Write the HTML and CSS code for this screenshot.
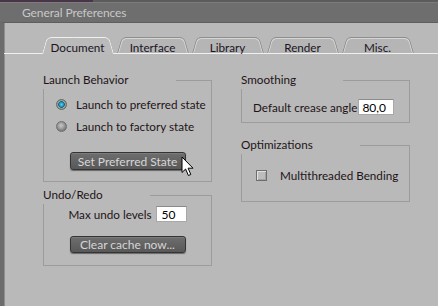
FILE: index.html
```html
<!DOCTYPE html>
<html lang="en">
<head>
    <meta charset="UTF-8">
    <meta name="viewport" content="width=device-width, initial-scale=1.0">
    <title>General Preferences</title>
    <link rel="stylesheet" href="styles.css">
</head>
<body>

<div class="desk"></div>

<div class="window">
    <div class="title-bar">General Preferences</div>

    <div class="window-body">
        <!-- Tabs -->
        <div class="tabs">
            <div class="tab active">Document</div>
            <div class="tab">Interface</div>
            <div class="tab">Library</div>
            <div class="tab">Render</div>
            <div class="tab">Misc.</div>
        </div>

        <div class="panel">
            <div class="column">
                <div class="group">
                    <div class="group-head">
                        <span class="group-label">Launch Behavior</span>
                        <span class="group-rule"></span>
                    </div>
                    <div class="group-body launch-body">
                        <label class="radio-row">
                            <span class="radio checked"></span>
                            Launch to preferred state
                        </label>
                        <label class="radio-row">
                            <span class="radio"></span>
                            Launch to factory state
                        </label>
                        <div class="btn-row">
                            <button class="dark-btn">Set Preferred State
                                <svg class="cursor" width="14" height="21" viewBox="0 0 14 21">
                                    <path d="M1 1 L1 16.5 L4.6 13 L7.4 19.5 L9.8 18.5 L7.1 12.2 L12 12.2 Z" fill="#fff" stroke="#000" stroke-width="1" stroke-linejoin="round"/>
                                </svg>
                            </button>
                        </div>
                    </div>
                </div>

                <div class="group undo-group">
                    <div class="group-head">
                        <span class="group-label">Undo/Redo</span>
                        <span class="group-rule"></span>
                    </div>
                    <div class="group-body undo-body">
                        <div class="field-row center">
                            <span>Max undo levels</span>
                            <input type="text" class="num-input small" value="50">
                        </div>
                        <div class="btn-row">
                            <button class="dark-btn clear-btn">Clear cache now...</button>
                        </div>
                    </div>
                </div>
            </div>

            <div class="column">
                <div class="group">
                    <div class="group-head">
                        <span class="group-label">Smoothing</span>
                        <span class="group-rule"></span>
                    </div>
                    <div class="group-body smooth-body">
                        <div class="field-row">
                            <span>Default crease angle</span>
                            <input type="text" class="num-input" value="80,0">
                        </div>
                    </div>
                </div>

                <div class="group optim-group">
                    <div class="group-head">
                        <span class="group-label">Optimizations</span>
                        <span class="group-rule"></span>
                    </div>
                    <div class="group-body optim-body">
                        <label class="check-row">
                            <span class="checkbox"></span>
                            Multithreaded Bending
                        </label>
                    </div>
                </div>
            </div>
        </div>
    </div>
</div>

</body>
</html>
```

FILE: styles.css
```css
/* General styles */
body {
    font-family: Lato, "Liberation Sans", sans-serif;
    font-size: 11.7px;
    color: #1e1418;
    background-color: #b9b9b9;
    margin: 0;
    padding: 0;
    overflow: hidden;
}

.desk {
    height: 2px;
    background: linear-gradient(to right, #4a3447 0, #4a3447 93px, #5c5c5c 93px);
}

/* Window */
.title-bar {
    height: 19px;
    line-height: 19px;
    padding-left: 22px;
    background-color: #6e6e6e;
    border-top: 1px solid #7c7c7c;
    color: #c8c8c8;
    font-size: 12px;
    letter-spacing: -0.1px;
}

.window-body {
    min-height: 284px;
    background-color: #b9b9b9;
    border-left: 4px solid #6c6c6c;
    border-top: 1px solid #5e5e5e;
    box-shadow: inset 1px 0 0 #8e8e8e;
}

/* Tabs */
.tabs {
    display: flex;
    align-items: flex-end;
    margin-top: 14px;
    padding-left: 36px;
    border-bottom: 1px solid #f0f0f0;
}

.tab {
    position: relative;
    z-index: 0;
    width: 75px;
    height: 12px;
    padding-top: 4px;
    line-height: 13px;
    text-align: center;
    color: #1a1424;
}

.tab::before,
.tab::after {
    content: '';
    position: absolute;
    top: 0;
    bottom: 0;
    z-index: -1;
    background-color: #b5b5b5;
    border-top: 1px solid #8e8e8e;
    transform-origin: bottom;
}

.tab::before {
    left: 2px;
    right: 50%;
    border-left: 1px solid #8e8e8e;
    border-top-left-radius: 5px;
    box-shadow: inset 1px 1px 0 #d6d6d6;
    transform: skewX(-16deg);
}

.tab::after {
    left: 50%;
    right: 2px;
    border-right: 1px solid #8e8e8e;
    border-top-right-radius: 5px;
    box-shadow: inset -1px 1px 0 #d6d6d6;
    transform: skewX(16deg);
}

.tab.active {
    z-index: 1;
    height: 13px;
    margin-bottom: -1px;
}

.tab.active::before,
.tab.active::after {
    background-color: #bababa;
    border-color: #efefef;
    box-shadow: none;
}

/* Panel & groups */
.panel {
    display: flex;
    gap: 29px;
    padding: 18px 0 0 39px;
}

.column {
    width: 169px;
}

.group-head {
    display: flex;
    height: 17px;
}

.group-label {
    line-height: 14px;
    white-space: nowrap;
}

.group-rule {
    flex: 1;
    align-self: flex-end;
    height: 8px;
    margin-left: 47px;
    border-top: 1px solid #9c9c9c;
    border-right: 1px solid #9c9c9c;
}

.group-body {
    border: 1px solid #9c9c9c;
    border-top: none;
}

.launch-body {
    padding: 4px 0 11px 12px;
}

.undo-group {
    margin-top: 5px;
}

.undo-body {
    padding: 2px 0 12px 0;
}

.smooth-body {
    padding: 10px 0 7px 11px;
}

.optim-group {
    margin-top: 14px;
}

.optim-body {
    padding: 13px 0 18px 14px;
}

/* Radios */
.radio-row {
    display: flex;
    align-items: center;
    gap: 9px;
    height: 22px;
}

.radio {
    width: 9px;
    height: 9px;
    border-radius: 50%;
    border: 1px solid #6f6f6f;
    background: radial-gradient(circle at 45% 40%, #c8c8c8 0, #9e9e9e 3px, #7e7e7e 5px);
}

.radio.checked {
    border-color: #5d6a62;
    background: radial-gradient(circle, #5fd0f2 0, #1f9ccc 2px, #1b5e74 3px, #9eaaa2 3.6px, #7f8a83 5px);
}

/* Buttons */
.btn-row {
    display: flex;
    justify-content: center;
    margin-top: 15px;
}

.launch-body .btn-row {
    margin-left: -12px;
}

.undo-body .btn-row {
    margin-top: 14px;
}

.dark-btn {
    position: relative;
    width: 116px;
    height: 18px;
    padding: 0;
    font-family: Lato, "Liberation Sans", sans-serif;
    font-size: 12px;
    color: #d6d6d6;
    background: linear-gradient(#6e6e6e, #585858);
    border: 1px solid #343434;
    border-radius: 3px;
    box-shadow: 0 1px 1px rgba(0, 0, 0, 0.45), inset 0 1px 0 #7c7c7c;
    cursor: pointer;
}

.clear-btn {
    height: 17px;
}

.cursor {
    position: absolute;
    left: 110px;
    top: 3px;
}

/* Fields */
.field-row {
    display: flex;
    align-items: center;
    gap: 1px;
    height: 16px;
}

.field-row.center {
    justify-content: center;
    gap: 4px;
}

.num-input {
    width: 36px;
    height: 16px;
    padding: 0 0 0 3px;
    box-sizing: border-box;
    font-family: Lato, "Liberation Sans", sans-serif;
    font-size: 12px;
    color: #000;
    background-color: #fff;
    border: 1px solid #a8a8a8;
    border-top-color: #8a8a8a;
    outline: none;
}

.num-input.small {
    width: 31px;
    padding-left: 5px;
}

/* Checkbox */
.check-row {
    display: flex;
    align-items: center;
    gap: 13px;
    height: 16px;
}

.checkbox {
    width: 9px;
    height: 9px;
    border: 1px solid #6e6e6e;
    background-color: #bdbdbd;
    box-shadow: inset 1px 1px 0 #e2e2e2, inset -1px -1px 0 #a2a2a2;
}
```
